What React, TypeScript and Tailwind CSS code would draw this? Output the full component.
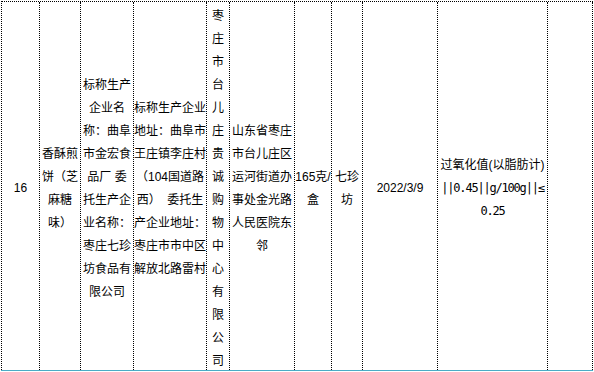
import React from "react";

type Col = { w: string; lines: string[]; mono?: number[] };

const cols: Col[] = [
  { w: "w-[38px]", lines: ["16"] },
  { w: "w-[41px]", lines: ["香酥煎", "饼（芝", "麻糖", "味）"] },
  {
    w: "w-[53px]",
    lines: ["标称生产", "企业名", "称：曲阜", "市金宏食", "品厂 委", "托生产企", "业名称：", "枣庄七珍", "坊食品有", "限公司"],
  },
  {
    w: "w-[73px]",
    lines: ["标称生产企业", "地址：曲阜市", "王庄镇李庄村", "（104国道路", "西）  委托生", "产企业地址：", "枣庄市市中区", "解放北路雷村"],
  },
  { w: "w-[23px]", lines: "枣庄市台儿庄贵诚购物中心有限公司".split("") },
  { w: "w-[65px]", lines: ["山东省枣庄", "市台儿庄区", "运河街道办", "事处金光路", "人民医院东", "邻"] },
  { w: "w-[37px]", lines: ["165克/", "盒"] },
  { w: "w-[31px]", lines: ["七珍", "坊"] },
  { w: "w-[75px]", lines: ["2022/3/9"] },
  { w: "w-[110px]", lines: ["过氧化值(以脂肪计)", "||0.45||g/100g||≤", "0.25"], mono: [1, 2] },
  { w: "w-[45px]", lines: [] },
];

export default function App() {
  return (
    <div className="w-[594px] h-[372px] bg-white overflow-hidden">
      <div
        className="ml-[1px] mt-[1px] w-[592px] flex border-l border-t border-dotted border-black border-b-0"
        style={{ fontFamily: '"Liberation Sans", "Noto Sans CJK SC", sans-serif' }}
      >
        {cols.map((c, i) => (
          <div
            key={i}
            className={`${c.w} h-[368px] shrink-0 border-r border-dotted border-black flex flex-col items-center justify-center pt-[5px] text-[12px] leading-[23px] text-black`}
          >
            {c.lines.map((l, j) =>
              c.mono && c.mono.includes(j) ? (
                <div
                  key={j}
                  className="whitespace-pre text-center tracking-[-1.2px] font-['DejaVu_Sans_Mono',monospace]"
                >
                  {l}
                </div>
              ) : (
                <div key={j} className="whitespace-pre text-center">
                  {l}
                </div>
              )
            )}
          </div>
        ))}
      </div>
      <div className="ml-[1px] w-[592px] h-[1px] bg-[#4bacc6]" />
    </div>
  );
}
